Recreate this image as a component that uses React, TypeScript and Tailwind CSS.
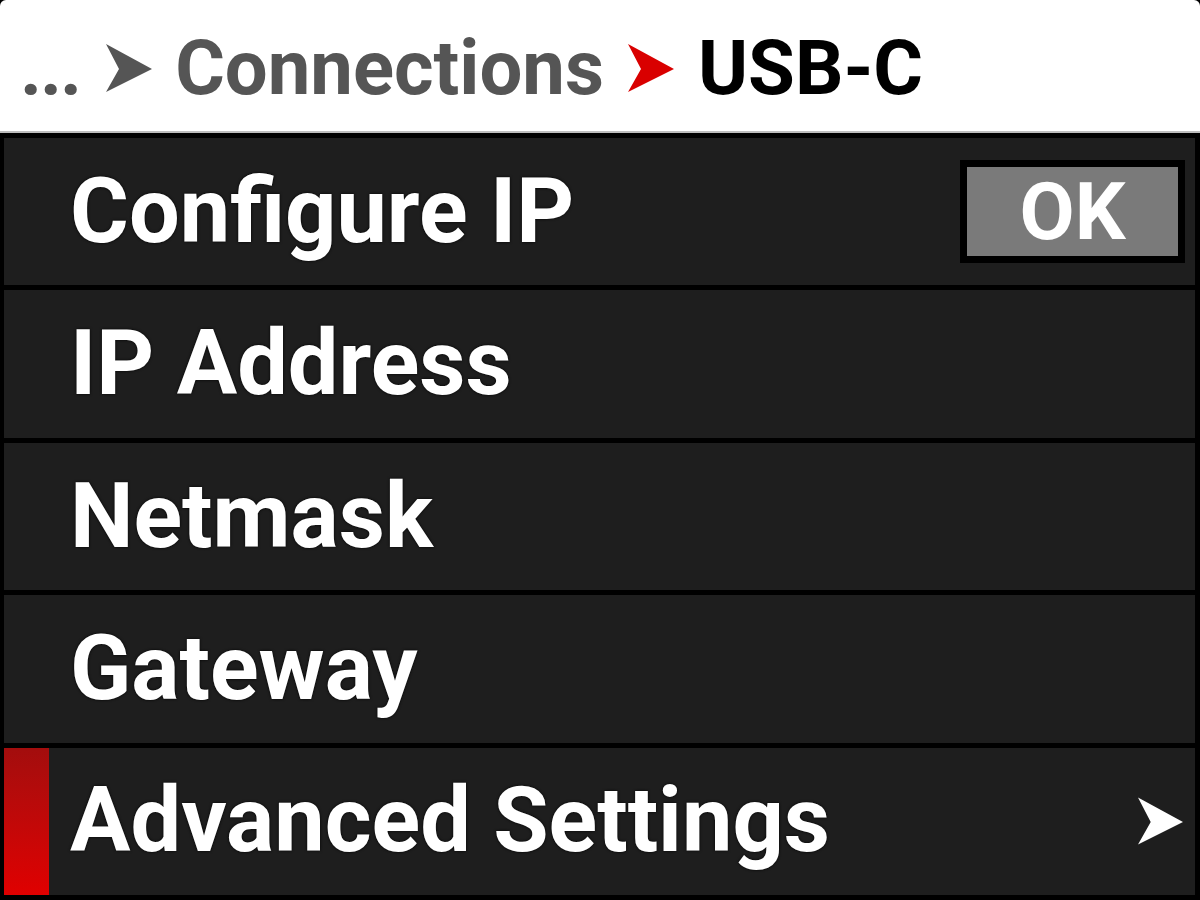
import React from 'react';

// dart shaped chevron used in the breadcrumb and on the submenu row
function Dart({ className }: { className?: string }) {
    return (
        <svg viewBox="0 0 46 48" className={className} fill="currentColor">
            <polygon points="0,0 46,25 0,48 13,25" />
        </svg>
    );
}

const rows = [
    { label: 'Configure IP', ok: true },
    { label: 'IP Address' },
    { label: 'Netmask' },
    { label: 'Gateway' },
    { label: 'Advanced Settings', sub: true, selected: true },
];

export default function App() {
    return (
        <div
            className="w-[1200px] h-[900px] bg-black flex flex-col overflow-hidden"
            style={{ fontFamily: 'Roboto, "Liberation Sans", sans-serif' }}
        >
            <div className="h-[133px] bg-white rounded-t-[6px] flex items-center pl-[20px] pt-[4px] font-bold text-[76px] leading-none border-b-2 border-[#bdbdbd] shrink-0">
                <span className="text-[#555555] tracking-[-2px]">...</span>
                <Dart className="w-[46px] h-[48px] text-[#555555] ml-[26px] mr-[23px]" />
                <span className="text-[#555555]">Connections</span>
                <Dart className="w-[46px] h-[48px] text-[#d90000] ml-[24px] mr-[24px]" />
                <span className="text-black">USB-C</span>
            </div>

            <div className="flex-1 flex flex-col gap-[5px] pt-[5px] pb-[5px] pl-[4px] pr-[5px]">
                {rows.map((row) => (
                    <div key={row.label} className="flex-1 bg-[#1e1e1e] flex items-center relative">
                        {row.selected && (
                            <div className="w-[45px] self-stretch bg-gradient-to-b from-[#a30d0d] to-[#e00000]" />
                        )}
                        <span
                            className={`text-white font-bold text-[90px] leading-none ${row.selected ? 'pl-[21px]' : 'pl-[66px]'}`}
                            style={{ textShadow: '0 0 3px #000' }}
                        >
                            {row.label}
                        </span>
                        {row.ok && (
                            <div className="ml-auto mr-[10px] border-[7px] border-black bg-[#7a7a7a] w-[225px] h-[103px] flex items-center justify-center">
                                <span className="text-white font-bold text-[80px] leading-none">OK</span>
                            </div>
                        )}
                        {row.sub && (
                            <Dart className="ml-auto mr-[12px] w-[45px] h-[48px] text-white" />
                        )}
                    </div>
                ))}
            </div>
        </div>
    );
}
